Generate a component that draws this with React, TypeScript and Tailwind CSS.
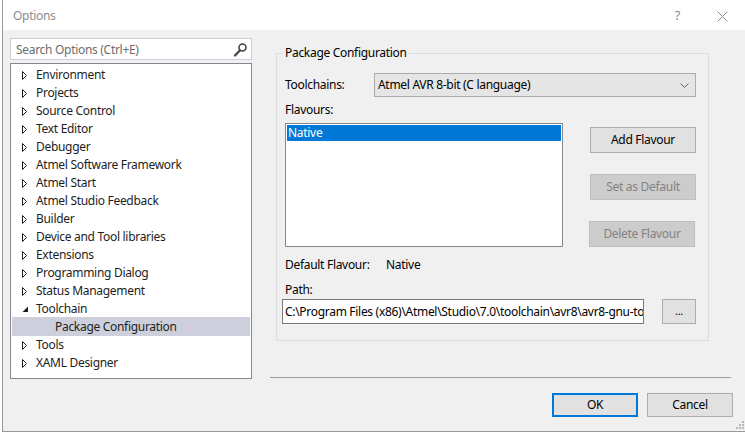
import React from "react";

type TreeItem = { label: string; state?: "closed" | "open" | "leaf"; child?: boolean; selected?: boolean };

const treeItems: TreeItem[] = [
  { label: "Environment" },
  { label: "Projects" },
  { label: "Source Control" },
  { label: "Text Editor" },
  { label: "Debugger" },
  { label: "Atmel Software Framework" },
  { label: "Atmel Start" },
  { label: "Atmel Studio Feedback" },
  { label: "Builder" },
  { label: "Device and Tool libraries" },
  { label: "Extensions" },
  { label: "Programming Dialog" },
  { label: "Status Management" },
  { label: "Toolchain", state: "open" },
  { label: "Package Configuration", state: "leaf", child: true, selected: true },
  { label: "Tools" },
  { label: "XAML Designer" },
];

const Arrow: React.FC<{ state?: TreeItem["state"] }> = ({ state = "closed" }) => {
  if (state === "leaf") return null;
  if (state === "open")
    return (
      <svg width="7" height="7" viewBox="0 0 7 7">
        <path d="M6 0.5V6H0.5Z" fill="#1e1e1e" />
      </svg>
    );
  return (
    <svg width="6" height="9" viewBox="0 0 6 9">
      <path d="M0.5 0.5L4.5 4.5L0.5 8.5Z" fill="none" stroke="#1e1e1e" strokeLinejoin="round" />
    </svg>
  );
};

const Button: React.FC<{ label: string; disabled?: boolean; className?: string }> = ({
  label,
  disabled = false,
  className = "",
}) => (
  <div
    className={`flex items-center justify-center border ${
      disabled ? "bg-[#cccccc] border-[#bfbfbf] text-[#838383]" : "bg-[#e1e1e1] border-[#adadad] text-black"
    } ${className}`}
  >
    {label}
  </div>
);

export default function App() {
  return (
    <div className="w-[745px] h-[434px] bg-white overflow-hidden flex font-['Noto_Sans',sans-serif] text-[12px] tracking-[-0.3px] text-[#1e1e1e]">
      <div className="w-[2px] shrink-0 bg-white" />
      <div className="w-[743px] h-[432px] shrink-0 border-l border-b border-[#9a9a9a] flex flex-col relative">
        {/* title bar */}
        <div className="h-[30px] shrink-0 bg-white flex items-center pt-[2px] pl-[10px] pr-[17px] text-[#8c8c8c]">
          <span>Options</span>
          <span className="ml-auto text-[13px]">?</span>
          <svg className="ml-[37px]" width="11" height="11" viewBox="0 0 11 11">
            <path d="M0.5 0.5L10.5 10.5M10.5 0.5L0.5 10.5" stroke="#8c8c8c" strokeWidth="1" />
          </svg>
        </div>

        <div className="flex-1 bg-[#f0f0f0] flex">
          {/* left column */}
          <div className="ml-[7px] mt-[8px] w-[242px] flex flex-col">
            <div className="h-[22px] bg-white border border-[#cccedb] flex items-center pt-[1px] pl-[5px] pr-[4px] text-[#6d6d6d]">
              <span>Search Options (Ctrl+E)</span>
              <svg className="ml-auto" width="13" height="14" viewBox="0 0 13 14">
                <circle cx="8.5" cy="4.5" r="3.5" fill="none" stroke="#424242" strokeWidth="1.6" />
                <path d="M5.8 7.4L1 12.5" stroke="#424242" strokeWidth="2.2" strokeLinecap="round" />
              </svg>
            </div>
            <div className="mt-[3px] h-[316px] bg-white border border-[#828790] px-[1px] pt-[2px]">
              {treeItems.map((item) => (
                <div
                  key={item.label}
                  className={`h-[18px] flex items-center whitespace-nowrap ${
                    item.selected ? "bg-[#cdd0dc] -mt-[1px] pt-[1px] h-[19px]" : ""
                  } ${item.child ? "pl-[43px]" : "pl-[10px]"}`}
                >
                  {!item.child && (
                    <span className="w-[14px] flex items-center">
                      <Arrow state={item.state} />
                    </span>
                  )}
                  <span>{item.label}</span>
                </div>
              ))}
            </div>
          </div>

          {/* right column */}
          <div className="ml-[18px] mt-[15px] w-[463px] flex flex-col text-black">
            <fieldset className="ml-[6px] w-[433px] border border-[#dcdcdc] pl-[8px] pr-[12px] pt-[12px] pb-[16px]">
              <legend className="px-[2px] -ml-[2px] leading-[16px]">Package Configuration</legend>

              <div className="flex items-center h-[24px]">
                <span className="w-[89px]">Toolchains:</span>
                <div className="w-[322px] h-[24px] bg-[#e5e5e5] border border-[#acacac] flex items-center pl-[3px] pr-[6px]">
                  <span>Atmel AVR 8-bit (C language)</span>
                  <svg className="ml-auto" width="9" height="5" viewBox="0 0 9 5">
                    <path d="M0.5 0.5L4.5 4.5L8.5 0.5" fill="none" stroke="#606060" />
                  </svg>
                </div>
              </div>

              <div className="mt-[5px] leading-[16px]">Flavours:</div>

              <div className="mt-[5px] flex">
                <div className="w-[278px] h-[124px] bg-white border border-[#828790] p-[1px]">
                  <div className="h-[16px] bg-[#0078d7] text-white flex items-center pl-[1px]">Native</div>
                </div>
                <div className="ml-[27px] pt-[4px] flex flex-col gap-[21px]">
                  <Button label="Add Flavour" className="w-[106px] h-[26px]" />
                  <Button label="Set as Default" disabled className="w-[106px] h-[26px]" />
                  <Button label="Delete Flavour" disabled className="w-[106px] h-[26px] -ml-[1px]" />
                </div>
              </div>

              <div className="mt-[10px] flex leading-[16px]">
                <span className="w-[101px]">Default Flavour:</span>
                <span>Native</span>
              </div>

              <div className="mt-[9px] leading-[16px]">Path:</div>

              <div className="mt-[1px] flex">
                <div className="-ml-[3px] w-[362px] h-[25px] bg-white border border-[#7a7a7a] flex items-center pl-[2px] overflow-hidden whitespace-nowrap">
                  C:\Program Files (x86)\Atmel\Studio\7.0\toolchain\avr8\avr8-gnu-toolchain
                </div>
                <Button label="..." className="ml-auto w-[34px] h-[25px] text-[11px]" />
              </div>
            </fieldset>

            <div className="mt-[36px] w-[461px] border-t border-[#a0a0a0]" />

            <div className="mt-[15px] flex justify-end gap-[9px]">
              <div className="w-[86px] h-[24px] bg-[#e1e1e1] border-2 border-[#0078d7] flex items-center justify-center">
                OK
              </div>
              <Button label="Cancel" className="w-[86px] h-[24px]" />
            </div>
          </div>
        </div>

        {/* resize grip */}
        <svg className="absolute right-[1px] bottom-[2px]" width="8" height="8" viewBox="0 0 8 8">
          <rect x="6" y="0" width="2" height="2" fill="#b8b8b8" />
          <rect x="3" y="3" width="2" height="2" fill="#b8b8b8" />
          <rect x="6" y="3" width="2" height="2" fill="#b8b8b8" />
          <rect x="0" y="6" width="2" height="2" fill="#b8b8b8" />
          <rect x="3" y="6" width="2" height="2" fill="#b8b8b8" />
          <rect x="6" y="6" width="2" height="2" fill="#b8b8b8" />
        </svg>
      </div>
    </div>
  );
}
